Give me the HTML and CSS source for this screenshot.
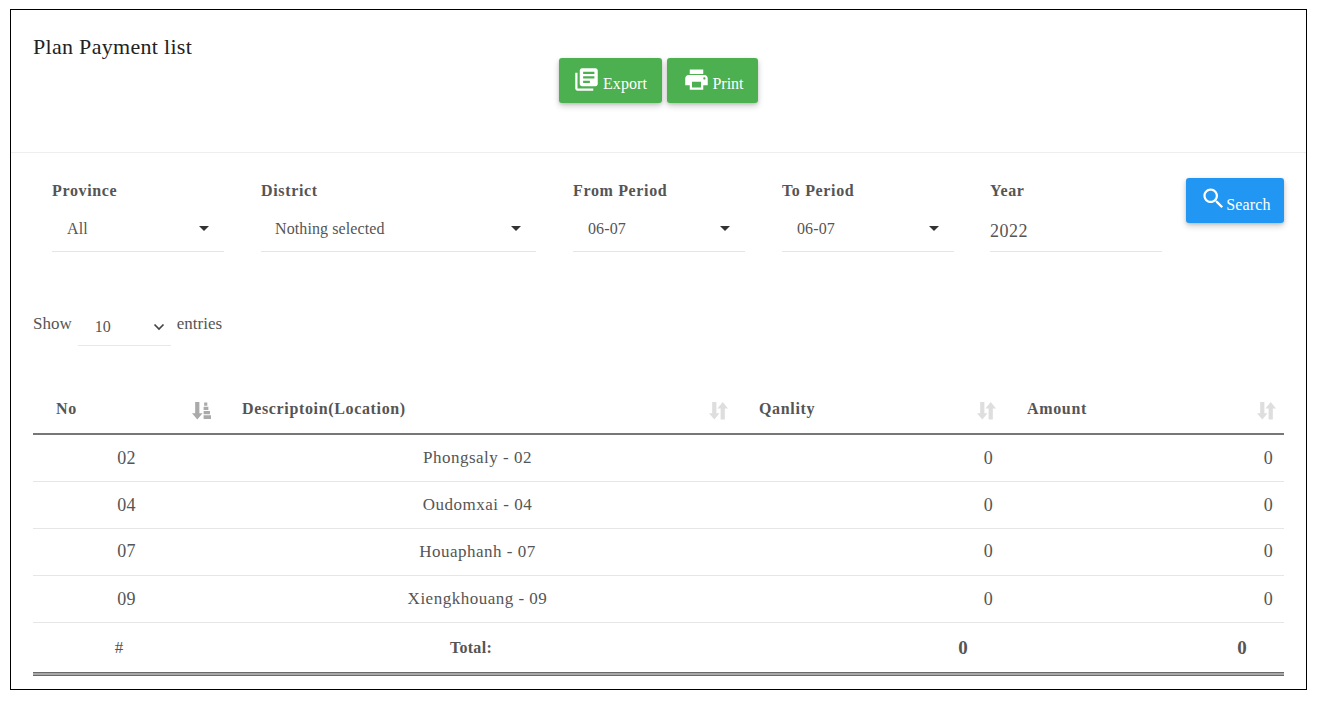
FILE: index.html
```html
<!DOCTYPE html>
<html lang="en">
<head>
<meta charset="utf-8">
<title>Plan Payment list</title>
<link rel="stylesheet" href="styles.css">
</head>
<body>
<main class="frame">
  <header class="head">
    <h1 class="title">Plan Payment list</h1>
    <div class="actions">
      <button class="btn btn-green btn-export" type="button">
        <svg class="ico-export" viewBox="0 0 24 24" aria-hidden="true"><path d="M4 6H2v14c0 1.1.9 2 2 2h14v-2H4V6zm16-4H8c-1.1 0-2 .9-2 2v12c0 1.1.9 2 2 2h12c1.1 0 2-.9 2-2V4c0-1.1-.9-2-2-2zm-1 9H9V9h10v2zm-4 4H9v-2h6v2zm4-8H9V5h10v2z"/></svg>
        <span>Export</span>
      </button>
      <button class="btn btn-green btn-print" type="button">
        <svg class="ico-print" viewBox="0 0 24 24" aria-hidden="true"><path d="M19 8H5c-1.66 0-3 1.34-3 3v6h4v4h12v-4h4v-6c0-1.66-1.34-3-3-3zm-3 11H8v-5h8v5zm3-7c-.55 0-1-.45-1-1s.45-1 1-1 1 .45 1 1-.45 1-1 1zm-1-9H6v4h12V3z"/></svg>
        <span>Print</span>
      </button>
    </div>
  </header>

  <section class="filters">
    <div class="field f-province">
      <label class="lbl">Province</label>
      <div class="pick"><span>All</span><i class="caret"></i></div>
    </div>
    <div class="field f-district">
      <label class="lbl">District</label>
      <div class="pick"><span>Nothing selected</span><i class="caret"></i></div>
    </div>
    <div class="field f-from">
      <label class="lbl">From Period</label>
      <div class="pick"><span>06-07</span><i class="caret"></i></div>
    </div>
    <div class="field f-to">
      <label class="lbl">To Period</label>
      <div class="pick"><span>06-07</span><i class="caret"></i></div>
    </div>
    <div class="field f-year">
      <label class="lbl">Year</label>
      <div class="year-val">2022</div>
    </div>
    <button class="btn btn-blue" type="button">
      <svg class="ico-search" viewBox="0 0 24 24" aria-hidden="true"><path d="M15.5 14h-.79l-.28-.27C15.41 12.59 16 11.11 16 9.5 16 5.91 13.09 3 9.5 3S3 5.91 3 9.5 5.91 16 9.5 16c1.61 0 3.09-.59 4.23-1.57l.27.28v.79l5 4.99L20.49 19l-4.99-5zm-6 0C7.01 14 5 11.99 5 9.5S7.01 5 9.5 5 14 7.01 14 9.5 11.99 14 9.5 14z"/></svg>
      <span>Search</span>
    </button>
  </section>

  <section class="length">
    <span>Show</span>
    <div class="len-pick"><span>10</span>
      <svg class="chev" viewBox="0 0 12 8" aria-hidden="true"><path d="M1.500 1.500 6 6l4.500-4.500" fill="none" stroke="#444" stroke-width="1.700"/></svg>
    </div>
    <span>entries</span>
  </section>

  <table class="grid">
    <colgroup><col class="c1"><col class="c2"><col class="c3"><col class="c4"></colgroup>
    <thead>
      <tr>
        <th><div class="th"><span>No</span>
          <svg class="sort on" viewBox="0 0 18 18" aria-hidden="true"><path d="M3 1h4v10.500h3L5 17.500 0 11.500h3z"/><path d="M11.500 1.500h3v3h-3zM11 5.500h4.500v3H11zM11 9.500h6v3h-6zM11 13.500h7v3.500h-7z"/></svg>
        </div></th>
        <th><div class="th"><span>Descriptoin(Location)</span>
          <svg class="sort" viewBox="0 0 18 18" aria-hidden="true"><path d="M3 1h4v10.500h3L5 17.500 0 11.500h3zM11 17.500V7H8l5-6 5 6h-3v10.500z"/></svg>
        </div></th>
        <th><div class="th"><span>Qanlity</span>
          <svg class="sort" viewBox="0 0 18 18" aria-hidden="true"><path d="M3 1h4v10.500h3L5 17.500 0 11.500h3zM11 17.500V7H8l5-6 5 6h-3v10.500z"/></svg>
        </div></th>
        <th><div class="th"><span>Amount</span>
          <svg class="sort" viewBox="0 0 18 18" aria-hidden="true"><path d="M3 1h4v10.500h3L5 17.500 0 11.500h3zM11 17.500V7H8l5-6 5 6h-3v10.500z"/></svg>
        </div></th>
      </tr>
    </thead>
    <tbody>
      <tr><td class="mid">02</td><td class="mid">Phongsaly - 02</td><td class="num">0</td><td class="num">0</td></tr>
      <tr><td class="mid">04</td><td class="mid">Oudomxai - 04</td><td class="num">0</td><td class="num">0</td></tr>
      <tr><td class="mid">07</td><td class="mid">Houaphanh - 07</td><td class="num">0</td><td class="num">0</td></tr>
      <tr><td class="mid">09</td><td class="mid">Xiengkhouang - 09</td><td class="num">0</td><td class="num">0</td></tr>
    </tbody>
    <tfoot>
      <tr><td class="foot-no">#</td><td class="foot-label">Total:</td><td class="foot-num">0</td><td class="foot-num">0</td></tr>
    </tfoot>
  </table>
</main>
</body>
</html>
```
FILE: styles.css
```css
* { box-sizing: border-box; }
html, body { margin: 0; padding: 0; background: #fff; }
body {
  padding: 9px 10px 11px;
  font-family: "Liberation Serif", "Times New Roman", serif;
  color: #555;
}
.frame {
  width: 1297px;
  height: 681px;
  border: 1px solid #000;
  background: #fff;
}
.head {
  position: relative;
  height: 143px;
  border-bottom: 1px solid #eee;
  padding: 24px 22px 0;
}
.title {
  margin: 0;
  font-size: 22px;
  line-height: 26px;
  font-weight: 400;
  color: #222;
  letter-spacing: .3px;
}
.actions {
  display: flex;
  gap: 5px;
  position: absolute;
  left: 548px;
  top: 48px;
}
.btn {
  display: flex;
  align-items: center;
  justify-content: center;
  height: 45px;
  border: 0;
  border-radius: 3px;
  color: #fff;
  font-family: inherit;
  font-size: 16px;
  box-shadow: 0 3px 6px rgba(0,0,0,.2), 0 1px 3px rgba(0,0,0,.12);
  padding: 0;
}
.btn span { position: relative; top: 3px; }
.btn svg { fill: #fff; flex: none; }
.btn-green { background: #4caf50; }
.btn-export { width: 103px; gap: 3px; letter-spacing: .1px; }
.btn-print { width: 91px; gap: 3px; }
.ico-export { width: 27px; height: 27px; margin-top: -3px; margin-left: -1px; }
.ico-print { width: 27px; height: 27px; margin-top: -3px; margin-left: 2px; margin-right: -1px; }
.btn-blue {
  background: #2196f3;
  width: 98px;
  margin-left: -13px;
  margin-top: 25px;
  gap: 0;
  letter-spacing: .15px;
}
.btn-blue span { top: 4px; left: -1px; }
.ico-search { width: 27px; height: 27px; margin-top: -4px; margin-left: 2px; }

.filters {
  display: flex;
  align-items: flex-start;
  gap: 37px;
  padding: 0 0 0 41px;
  height: 125px;
}
.field { padding-top: 28px; flex: none; }
.f-province, .f-from, .f-to, .f-year { width: 172px; }
.f-district { width: 275px; }
.f-year { margin-left: -1px; }
.lbl {
  display: block;
  font-size: 16px;
  line-height: 19px;
  font-weight: 700;
  color: #555;
  letter-spacing: .65px;
}
.pick {
  display: flex;
  align-items: center;
  justify-content: space-between;
  height: 42px;
  margin-top: 10px;
  padding: 0 15px 0 15px;
  border-bottom: 1px solid #e5e5e5;
  font-size: 16px;
  color: #555;
  letter-spacing: .1px;
}
.f-district .pick { padding-left: 14px; }
.pick span { position: relative; top: -2px; }
.caret {
  display: block;
  margin-top: -4px;
  border-style: solid;
  border-width: 5px 5px 0;
  border-color: #333 transparent transparent;
}
.year-val {
  height: 42px;
  margin-top: 10px;
  padding-top: 11px;
  border-bottom: 1px solid #e5e5e5;
  font-size: 18px;
  line-height: 21px;
  color: #555;
  letter-spacing: .5px;
}
.length {
  display: flex;
  align-items: flex-start;
  padding-left: 22px;
  height: 107px;
  font-size: 17px;
  color: #555;
}
.length > span { line-height: 19px; margin-top: 36px; }
.len-pick {
  display: flex;
  justify-content: space-between;
  align-items: center;
  width: 93px;
  height: 38px;
  margin: 30px 6px 0 6px;
  padding: 0 6px 0 17px;
  border-bottom: 1px solid #e8e8e8;
  font-size: 16px;
}
.chev { width: 12px; height: 8px; }
.grid {
  border-collapse: collapse;
  table-layout: fixed;
  width: 1251px;
  margin-left: 22px;
}
.c1 { width: 186px; }
.c2 { width: 517px; }
.c3 { width: 268px; }
.c4 { width: 280px; }
.grid th {
  height: 49px;
  padding: 0 8px 0 23px;
  border-bottom: 2px solid #777;
  font-size: 16px;
  font-weight: 700;
  text-align: left;
  color: #555;
  letter-spacing: .65px;
}
.th { display: flex; align-items: center; justify-content: space-between; }
.sort { width: 19px; height: 19px; fill: #dedede; flex: none; margin-top: 2px; }
.sort.on { fill: #aaa; }
.grid td {
  height: 47px;
  padding: 0;
  border-bottom: 1px solid #e6e6e6;
  font-size: 18px;
  color: #555;
  letter-spacing: .2px;
}
.grid tbody tr:first-child td,
.grid tbody tr:nth-child(2) td,
.grid tbody tr:nth-child(4) td { padding-top: 1px; }
.grid td.mid { text-align: center; }
.grid td.mid:first-child { padding-left: 1px; }
.grid td.mid + td.mid { font-size: 17px; letter-spacing: .5px; }
.grid td.num { text-align: right; padding-right: 11px; }
.grid tfoot td {
  height: 54px;
  border-top: 1px solid #ddd;
  border-bottom: 0;
  background: linear-gradient(to bottom, #6a6a6a 1px, #a8a8a8 1px, #a8a8a8 3px, #6a6a6a 3px) bottom / 100% 4px no-repeat;
}
.grid td.foot-no { text-align: center; padding: 0 14px 3px 0; font-size: 17px; }
.grid td.foot-label { text-align: center; padding: 0 13px 3px 0; font-size: 16px; font-weight: 700; letter-spacing: .3px; }
.grid td.foot-num { text-align: right; padding: 0 36px 3px 0; font-weight: 700; font-size: 19px; }
.grid td.foot-num:last-child { padding-right: 37px; }
```
